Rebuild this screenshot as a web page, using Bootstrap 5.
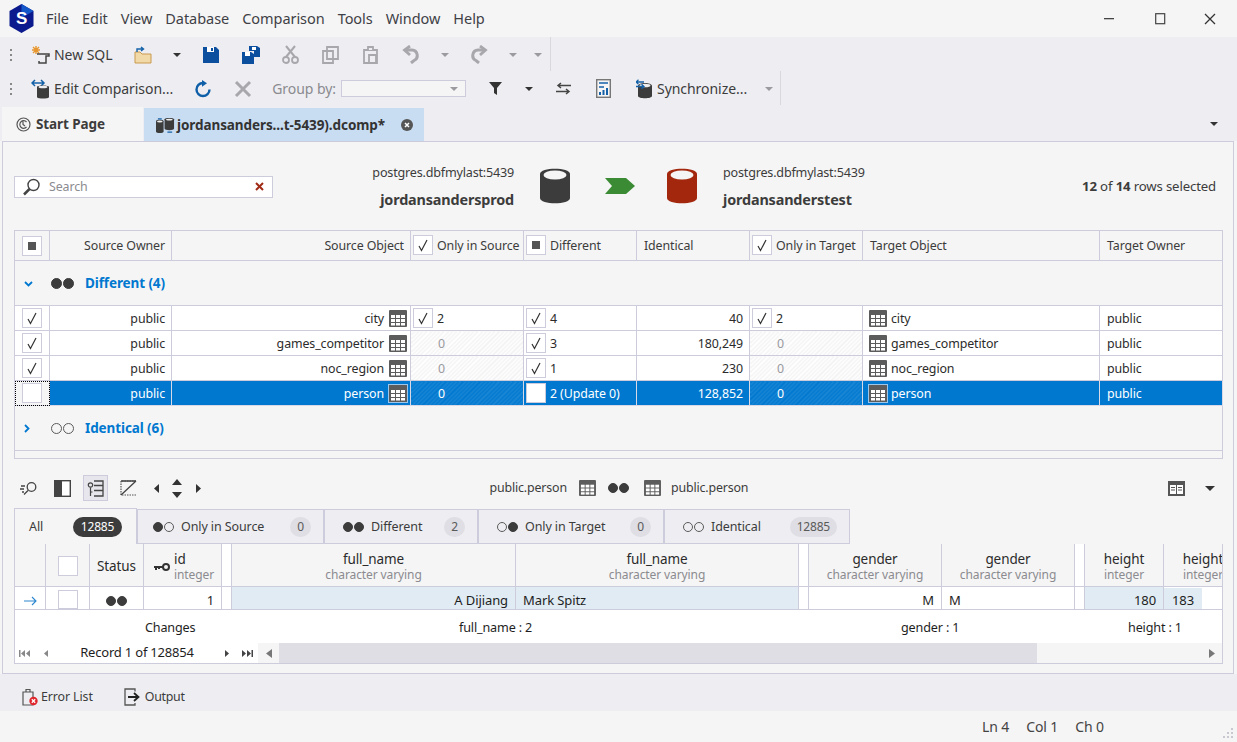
<!DOCTYPE html>
<html lang="en"><head><meta charset="utf-8"><title>dbForge</title>
<link href="https://cdn.jsdelivr.net/npm/bootstrap@5.3.0/dist/css/bootstrap.min.css" rel="stylesheet">
<style>
html,body{height:742px;overflow:hidden}
body{font-family:"Noto Sans","Liberation Sans",sans-serif;font-size:12.4px;color:#3c3c3c;background:#f5f5f5;letter-spacing:-.1px}
svg{display:block;flex:none}
.titlebar{height:37px;background:#f5f5f5}
.logo-box{width:46px;padding-left:9px}
.menu-i{font-size:14.5px;padding-right:13px;color:#3f3f46;letter-spacing:-.05px}
.win-i{width:50px;height:37px}
.win-r{margin-right:2px}
.tools{height:70px;background:#eeeef2}
.tbrow{height:34px;padding-top:1px}
.grip{width:31px;padding-left:9px}
.tb-i{width:40px}.tb-c{width:28px}.tb-c2{width:23px}.tb-c3{width:22px;margin-left:11px}
.tb-txt{font-size:14px;margin-left:4px;letter-spacing:-.05px}
.tb-txt-e{margin-right:10px}
.tb-off{color:#8a8a8f;margin-left:9px}
.tb-ml{margin-left:9px}
.tb-sync{margin-left:13px}
.tb-txt-s{margin-left:5px}
.sep{width:1px;height:34px;background:#d8d8df;margin-top:-1px}
.combo{width:125px;height:17px;background:#f5f5f5;border:1px solid #ccccdc;margin-left:5px;padding-right:3px}
.caret-d{width:0;height:0;border-left:4px solid transparent;border-right:4px solid transparent;border-top:4px solid #333}
.caret-g{border-top-color:#9a9a9f}
.caret-l{border-left-width:5px;border-right-width:5px;border-top-width:5px}
.tabstrip{height:34px;background:#eeeef2;padding-left:2px}
.tab-a{width:141px;background:#f5f5f5;padding:1px 0 0 14px;font-weight:700;font-size:13.5px;gap:5px}
.tab-b{width:281px;background:#c9ddf2;padding:1px 0 0 12px;font-weight:700;font-size:13.5px;gap:2px;border-left:1px solid #eeeef2;color:#333;margin-top:1px;letter-spacing:-.08px}
.tab-x{margin-left:14px}
.tab-car{margin-right:19px}
.panel{height:533px;margin:0 3px 0 2px;border:1px solid #ccccdc;background:#f5f5f5;padding:0 11px}
.info{height:88px}
.searchb{width:259px;height:22px;background:#fff;border:1px solid #ccccdc;padding:0 8px 0 7px;margin-top:1px;color:#8b8b90;font-size:12.4px}
.search-t{margin:2px 0 0 4px}
.src-t{width:241px;text-align:right}
.conn{font-size:12.6px;line-height:16px;margin-bottom:10px;padding-top:1px;letter-spacing:-.2px}
.dbn{font-size:14.4px;font-weight:700;line-height:18px;letter-spacing:-.15px}
.ic-a{margin-left:26px}.ic-b{margin-left:35px}.ic-c{margin-left:32px}.ic-d{margin-left:26px}
.rows-sel{margin-right:6px;margin-top:1px;font-size:13.2px;letter-spacing:-.15px}
.cmp{table-layout:fixed;width:1209px;border-collapse:collapse;background:transparent;margin:0;--bs-table-bg:transparent;color:#2b2b2b}
.cmp td,.cmp th{border:1px solid #ccccdc;padding:0 6px;font-weight:400;white-space:nowrap;overflow:hidden;vertical-align:middle}
.cmp th{height:30px;background:#f5f5f5;color:#3c3c3c;padding-top:2px}
.cmp tbody td{height:25px;background:#fff;padding-top:3px}
.cmp tbody td.grp,.cmp tbody td.grp2{height:45px;background:#f5f5f5;padding-top:1px}
.c0{width:35px}.c1{width:122px}.c2{width:239px}.c3{width:113px}.c4{width:123px}.c5{width:237px}
.cellf{gap:4px}
.gap-src{gap:5px}
.chk{width:20px;height:20px;background:#fff;border:1px solid #ccccdc}
.chk-sq::after{content:"";width:8px;height:8px;background:#555}
.cmp .cellf>.chk,.cmp .cellf>svg,.cmp .gap-src>svg{margin-top:-2px}
.cmp td.p-tight,.cmp th.p-tight{padding-left:2px;padding-right:3px}
.cmp td.p-cb,.cmp th.p-cb{padding:0 0 0 7px}
.cmp td.p-tg{padding-left:6px;padding-right:3px}
.cmp th.p-7,.cmp td.p-7{padding-left:7px}
.grplabel{color:#0078d0;font-weight:700;font-size:13.5px;gap:3px;letter-spacing:-.1px}
.arw{width:27px;padding-left:3px}
.dots{gap:1px}
.dot{width:11px;height:11px;border:1.5px solid #5a5a5a}
.dot-f{background:#3c3c3c;border-color:#3c3c3c}
.dots-s .dot{width:10px;height:10px}
.num-off{color:#9a9a9f;padding-left:21px}
.hatch{background:repeating-linear-gradient(135deg,#fff 0,#fff 1.5px,#f3f3f4 1.5px,#f3f3f4 3px)!important}
.cmp tr.sel td{background:#0078cf;color:#fff;border-color:#d8d8e6}
.cmp tr.sel td.hatch{background:repeating-linear-gradient(135deg,#0078cf 0,#0078cf 1.5px,#1a86d4 1.5px,#1a86d4 3px)!important}
.cmp tr.sel td.focusc{outline:1px dotted #000;outline-offset:-1px;background:#f5f5f5}
.num-sel{padding-left:21px}
.tbl-sel{outline:1px solid #9cc7ea}
.pad-grp{height:8px;background:#f5f5f5;border:1px solid #ccccdc;border-top:0;width:1209px}
.dtool{height:26px;margin:16px 0 0 -2px;position:relative}
.dt-i{width:33.5px;height:26px}
.dt-on{background:#e6e6ec;border:1px solid #ccccdc;width:25px;margin:0 4px}
.dt-s{width:21px}
.dt-mid{margin-left:281px;gap:12px;font-size:12.4px;letter-spacing:-.15px}
.dt-mid2{margin-left:3px}
.dt-last{margin-left:-2px}
.dt-end{margin-left:auto;margin-right:7px;gap:20px}
.dtabs{height:36px;margin-top:7px;width:1209px}
.dtab{height:35px;background:#eeeef2;border:1px solid #ccccdc;margin-top:1px;font-size:12.5px;gap:7px;padding:1px 12px 0 18px}
.dtab-all{width:123px;background:#f5f5f5;height:36px;margin-top:0;border-bottom:0;justify-content:space-between;padding:1px 14px 0}
.dw1{width:187px;padding-left:15px}.dw2{width:154px}.dw3{width:186px}.dw4{width:186px}
.pill{background:#dedee4;color:#5a5a5a;font-weight:400;font-size:12px;padding:3px 7px;border-radius:10px;line-height:14px;letter-spacing:-.2px}
.pill-d{background:#3c3c3c;color:#fff;padding:3px 7px;min-width:49px;text-align:center}
.gridbox{width:1209px;background:#fff;border:1px solid #ccccdc;border-top:0;overflow:hidden;height:120px}
.dg{table-layout:fixed;width:1228px;border-collapse:collapse;margin:-1px 0 0 -1px;font-size:13px;color:#1e1e1e;--bs-table-bg:transparent}
.dg th,.dg td{border:1px solid #ccccdc;padding:0 7px;font-weight:400;overflow:hidden;white-space:nowrap;vertical-align:middle;line-height:15px}
.dg th{height:43px;background:#f5f5f5;text-align:center;color:#2b2b2b;font-size:13.5px;padding-top:4px}
.dg th.p-st{padding-top:2px}
.dg th small{display:block;font-size:12px;color:#8b8b90;letter-spacing:-.1px}
.dg td{height:22px;background:#fff;padding-top:5px}
.dg th.gapc,.dg td.gapc{background:#fff;padding:0}
.dg td.dif{background:#e0ebf3}
.dg td.p-c{padding-top:3px}
.dg th.p-key{padding-left:2px;padding-right:0}
.chk-w{width:20px;height:20px;background:#fff;border:1px solid #ccccdc;margin:0 auto}
.dg td .chk-w{height:19px}
.gw0{width:31px}.gw1{width:44px}.gw2{width:54px}.gw3{width:78px}.gw4{width:10px}.gw5{width:284px}.gw6{width:283px}.gw7{width:133px}.gw8{width:79px}
.dg td.lastc{padding:0}
.lastin{width:38px;height:21px;background:#e0ebf3;padding:5px 0 0 8px;line-height:15px}
.sumrow{height:33px;padding-top:4px;font-size:12.6px;color:#1e1e1e;letter-spacing:-.15px}
.sm1{width:444px;padding-left:130px}.sm2{width:442px}.sm3{width:227px}
.navrow{height:21px}
.navl{width:243px;font-size:13px;color:#1e1e1e}
.nv1{width:18px}.nv2{width:24px}.nv3{width:20px}
.rec{width:160px;text-align:center;letter-spacing:-.2px;padding-bottom:2px}
.sbar{height:21px;background:#f5f5f5}
.sb-l{width:21px}.sb-th{width:758px;background:#dedee4;height:100%}.sb-r{margin-left:auto;width:20px}
.botbar{height:37px;background:#eeeef2;padding:9px 0 0 22px;font-size:12.4px}
.bot-i{gap:3px}
.bot-2{margin-left:31px;gap:4px}
.bot-o{letter-spacing:-.3px}
.statusb{height:31px;background:#f5f5f5;font-size:14px;color:#444}
.stt{margin-right:133px;gap:17px;margin-left:auto}
.grip-r{position:absolute;right:3px;bottom:3px}
.relw{position:relative}
</style></head><body>
<svg width="0" height="0" class="position-absolute">
<defs>
<symbol id="grip" viewBox="0 0 4 14"><rect x="1" y="1" width="2" height="2" fill="#888"/><rect x="1" y="6" width="2" height="2" fill="#888"/><rect x="1" y="11" width="2" height="2" fill="#888"/></symbol>
<symbol id="tbl" viewBox="0 0 18 17"><rect width="18" height="17" rx="1" fill="#5c5c5c"/><g fill="#fff"><rect x="2" y="5" width="4" height="3"/><rect x="7" y="5" width="4" height="3"/><rect x="12" y="5" width="4" height="3"/><rect x="2" y="9" width="4" height="3"/><rect x="7" y="9" width="4" height="3"/><rect x="12" y="9" width="4" height="3"/><rect x="2" y="13" width="4" height="2.5"/><rect x="7" y="13" width="4" height="2.5"/><rect x="12" y="13" width="4" height="2.5"/></g></symbol>
<symbol id="ck" viewBox="0 0 12 14"><path d="M2 8l2.500 4.500L10 2" fill="none" stroke="#333" stroke-width="1.200"/></symbol>
<symbol id="db" viewBox="0 0 30 36"><path d="M0 6C0-1 30-1 30 6V30C30 37 0 37 0 30Z" fill="currentColor"/><ellipse cx="15" cy="7" rx="11.500" ry="4.500" fill="#f5f5f5"/></symbol>
</defs></svg>

<div class="titlebar d-flex align-items-center">
 <div class="logo-box">
  <svg width="25" height="29" viewBox="0 0 25 29"><polygon points="12.5,0 24.5,7 24.5,22 12.5,29 .5,22 .5,7" fill="#0b1a8c"/><polygon points="12.5,0 24.5,7 12.5,14" fill="#1457c9"/><text x="12.5" y="20" text-anchor="middle" font-family="Liberation Sans" font-weight="700" font-size="17" fill="#fff">S</text></svg>
 </div>
 <nav class="d-flex">
  <span class="menu-i">File</span><span class="menu-i">Edit</span><span class="menu-i">View</span><span class="menu-i">Database</span><span class="menu-i">Comparison</span><span class="menu-i">Tools</span><span class="menu-i">Window</span><span class="menu-i">Help</span>
 </nav>
 <div class="ms-auto d-flex win-r">
  <div class="win-i d-flex align-items-center justify-content-center"><svg width="12" height="2"><rect width="10" height="1.3" fill="#444"/></svg></div>
  <div class="win-i d-flex align-items-center justify-content-center"><svg width="11" height="12"><rect x=".7" y=".7" width="9" height="10" fill="none" stroke="#444" stroke-width="1.2"/></svg></div>
  <div class="win-i d-flex align-items-center justify-content-center"><svg width="12" height="12"><path d="M1 1l10 10M11 1L1 11" stroke="#333" stroke-width="1.3"/></svg></div>
 </div>
</div>

<div class="tools">
 <div class="tbrow d-flex align-items-center">
  <div class="grip"><svg width="4" height="14"><use href="#grip"/></svg></div>
  <svg width="19" height="20" viewBox="0 0 19 20"><path d="M5 1v8M1 5h8M2 2l6 6M8 2L2 8" stroke="#e8962e" stroke-width="1.4"/><path d="M6 9h12v2h-3v7H8v-2" fill="none" stroke="#444" stroke-width="1.5"/></svg>
  <span class="tb-txt tb-txt-e">New SQL</span>
  <div class="tb-i d-flex justify-content-center"><svg width="18" height="18" viewBox="0 0 18 18"><path d="M1 6h5l2 2h9v9H1Z" fill="#f2d9a8" stroke="#c99a4e"/><path d="M3 6V3h6M7 1l2.500 2L7 5" fill="none" stroke="#1461a8" stroke-width="1.400"/></svg></div>
  <div class="tb-c d-flex justify-content-center"><span class="caret-d"></span></div>
  <div class="tb-i d-flex justify-content-center"><svg width="16" height="16" viewBox="0 0 16 16"><path d="M0 0h13l3 3v13H0Z" fill="#0b4f9e"/><rect x="4" y="0" width="7" height="5" fill="#fff"/><rect x="8" y="1" width="2" height="3" fill="#0b4f9e"/></svg></div>
  <div class="tb-i d-flex justify-content-center"><svg width="18" height="18" viewBox="0 0 18 18"><path d="M7 0h8l3 2v9h-6V5H7Z" fill="#0b4f9e"/><path d="M0 6h9l3 2v10H0Z" fill="#0b4f9e"/><rect x="3" y="6" width="5" height="4" fill="#fff"/><rect x="10" y="1" width="4" height="3" fill="#fff"/></svg></div>
  <div class="tb-i d-flex justify-content-center"><svg width="17" height="19" viewBox="0 0 17 19"><path d="M4 1l9 11M13 1L4 12" stroke="#a8a8ac" stroke-width="2"/><circle cx="4" cy="15" r="3" fill="none" stroke="#a8a8ac" stroke-width="1.800"/><circle cx="13" cy="15" r="3" fill="none" stroke="#a8a8ac" stroke-width="1.800"/></svg></div>
  <div class="tb-i d-flex justify-content-center"><svg width="17" height="18" viewBox="0 0 17 18"><path d="M5 1h11v12H5Z M1 5h10v12H1Z" fill="#eeeef2" stroke="#a8a8ac" stroke-width="1.800"/></svg></div>
  <div class="tb-i d-flex justify-content-center"><svg width="17" height="18" viewBox="0 0 17 18"><path d="M2 4h13v13H2Z" fill="none" stroke="#a8a8ac" stroke-width="1.800"/><path d="M6 4V1h5v3M7 9h7v8H7Z" fill="#eeeef2" stroke="#a8a8ac" stroke-width="1.800"/></svg></div>
  <div class="tb-i d-flex justify-content-center"><svg width="18" height="19" viewBox="0 0 18 19"><path d="M4 5h6a5.500 5.500 0 0 1 2 10.500L9 18" fill="none" stroke="#a8a8ac" stroke-width="3"/><path d="M8 1L2.500 5 8 10" fill="none" stroke="#a8a8ac" stroke-width="2.800"/></svg></div>
  <div class="tb-c d-flex justify-content-center"><span class="caret-d caret-g"></span></div>
  <div class="tb-i d-flex justify-content-center"><svg width="18" height="19" viewBox="0 0 18 19"><path d="M14 5H8a5.500 5.500 0 0 0-2 10.500L9 18" fill="none" stroke="#a8a8ac" stroke-width="3"/><path d="M10 1l5.500 4L10 10" fill="none" stroke="#a8a8ac" stroke-width="2.800"/></svg></div>
  <div class="tb-c d-flex justify-content-center"><span class="caret-d caret-g"></span></div>
  <div class="tb-c2 d-flex justify-content-center"><span class="caret-d caret-g"></span></div>
  <div class="sep"></div>
 </div>
 <div class="tbrow d-flex align-items-center">
  <div class="grip"><svg width="4" height="14"><use href="#grip"/></svg></div>
  <svg width="19" height="20" viewBox="0 0 19 20"><path d="M1 4h12M4 1L1 4l3 3M10 1l3 3-3 3" fill="none" stroke="#1461a8" stroke-width="1.500"/><path d="M6 8C6 6 18 6 18 8V18C18 20 6 20 6 18Z" fill="#3c3c3c"/><ellipse cx="12" cy="8" rx="4.500" ry="1.300" fill="#eee"/></svg>
  <span class="tb-txt tb-txt-e">Edit Comparison...</span>
  <div class="tb-i d-flex justify-content-center"><svg width="18" height="18" viewBox="0 0 18 18"><path d="M15.500 9.500A6.500 6.500 0 1 1 9 3h1" fill="none" stroke="#0f5fa8" stroke-width="2.400"/><path d="M8 0l5 3.200-5 3.500Z" fill="#0f5fa8"/></svg></div>
  <div class="tb-i d-flex justify-content-center"><svg width="18" height="18" viewBox="0 0 18 18"><path d="M2 2l14 14M16 2L2 16" stroke="#a8a8ac" stroke-width="3"/></svg></div>
  <span class="tb-txt tb-off">Group by:</span>
  <div class="combo d-flex align-items-center justify-content-end"><span class="caret-d caret-g me-1"></span></div>
  <div class="tb-i tb-ml d-flex justify-content-center"><svg width="13" height="13" viewBox="0 0 13 13"><path d="M0 0h13L8 6v7L5 11V6Z" fill="#333"/></svg></div>
  <div class="tb-c d-flex justify-content-center"><span class="caret-d"></span></div>
  <div class="tb-i d-flex justify-content-center"><svg width="15" height="13" viewBox="0 0 15 13"><path d="M15 3.500H2M5 1L2 3.500 5 6M0 9.500h13M10 7l3 2.500L10 12" fill="none" stroke="#444" stroke-width="1.500"/></svg></div>
  <div class="tb-i d-flex justify-content-center"><svg width="15" height="19" viewBox="0 0 15 19"><rect x=".7" y=".7" width="13.600" height="17.600" fill="#f5f5f5" stroke="#777" stroke-width="1.400"/><path d="M3 4h9" stroke="#1461a8" stroke-width="1.500"/><path d="M3 8h5" stroke="#1461a8" stroke-width="1.500"/><path d="M4 16v-3M7.500 16v-5M11 16V9" stroke="#1461a8" stroke-width="2"/></svg></div>
  <svg class="tb-sync" width="16" height="20" viewBox="0 0 16 20"><path d="M2 7C2 3 16 3 16 7V17C16 20 2 20 2 17Z" fill="#3c3c3c"/><ellipse cx="9" cy="6.500" rx="5.500" ry="1.800" fill="#eee"/><path d="M0 3h8M2.500 .8L0 3l2.500 2.200M0 7.500h8M5.500 5.300L8 7.500 5.500 9.700" fill="none" stroke="#1461a8" stroke-width="1.300"/></svg>
  <span class="tb-txt tb-txt-s">Synchronize...</span>
  <div class="tb-c3 d-flex justify-content-center"><span class="caret-d caret-g"></span></div>
  <div class="sep"></div>
 </div>
</div>

<div class="tabstrip d-flex">
 <div class="tab-a d-flex align-items-center"><svg width="15" height="15" viewBox="0 0 15 15"><circle cx="7.500" cy="7.500" r="6.500" fill="none" stroke="#555" stroke-width="1.200"/><path d="M10.500 5A3.800 3.800 0 1 0 10.500 10M7 4.500v3l2 1.500" fill="none" stroke="#555" stroke-width="1.200"/></svg><span>Start Page</span></div>
 <div class="tab-b d-flex align-items-center"><svg width="19" height="19" viewBox="0 0 20 19"><path d="M0 5C0 3 8 3 8 5V16C8 18 0 18 0 16Z" fill="#3c3c3c"/><ellipse cx="4" cy="5.300" rx="3" ry="1" fill="#eee"/><path d="M9 3C9 1 19 1 19 3V13C19 15 9 15 9 13Z" fill="#3c3c3c"/><ellipse cx="14" cy="3.300" rx="3.500" ry="1" fill="#eee"/><path d="M2 2.500h4M12 16.500h5" stroke="#1461a8" stroke-width="1.500"/></svg><span>jordansanders...t-5439).dcomp*</span>
  <svg class="tab-x" width="12" height="12" viewBox="0 0 12 12"><circle cx="6" cy="6" r="6" fill="#555"/><path d="M4 4l4 4M8 4L4 8" stroke="#fff" stroke-width="1.500"/></svg></div>
 <div class="ms-auto d-flex align-items-center tab-car"><span class="caret-d"></span></div>
</div>

<main class="panel">
 <div class="info d-flex align-items-center">
  <div class="searchb d-flex align-items-center">
   <svg class="me-1" width="19" height="18" viewBox="0 0 19 18"><circle cx="11.500" cy="7" r="5.500" fill="none" stroke="#444" stroke-width="1.400"/><path d="M7.500 11L2 16.500" stroke="#444" stroke-width="2.500"/></svg>
   <span class="search-t">Search</span>
   <svg class="ms-auto" width="9" height="9" viewBox="0 0 9 9"><path d="M1 1l7 7M8 1L1 8" stroke="#a12b16" stroke-width="2"/></svg>
  </div>
  <div class="src-t"><div class="conn">postgres.dbfmylast:5439</div><div class="dbn">jordansandersprod</div></div>
  <svg class="ic-a" width="30" height="36" color="#3c3c3c"><use href="#db"/></svg>
  <svg class="ic-b" width="30" height="16" viewBox="0 0 30 16"><polygon points="0,0 21,0 30,8 21,16 0,16 7,8" fill="#3a8b34"/></svg>
  <svg class="ic-c" width="30" height="36" color="#a3270d"><use href="#db"/></svg>
  <div class="ic-d"><div class="conn">postgres.dbfmylast:5439</div><div class="dbn">jordansanderstest</div></div>
  <div class="ms-auto rows-sel"><b>12</b> of <b>14</b> rows selected</div>
 </div>

 <table class="table cmp">
  <colgroup><col class="c0"><col class="c1"><col class="c2"><col class="c3"><col class="c3"><col class="c3"><col class="c3"><col class="c5"><col class="c4"></colgroup>
  <thead><tr>
   <th class="p-cb"><div class="chk chk-sq d-flex align-items-center justify-content-center"></div></th>
   <th class="text-end">Source Owner</th>
   <th class="text-end">Source Object</th>
   <th class="p-tight"><div class="d-flex align-items-center cellf"><div class="chk d-flex align-items-center justify-content-center"><svg width="12" height="14"><use href="#ck"/></svg></div>Only in Source</div></th>
   <th class="p-tight"><div class="d-flex align-items-center cellf"><div class="chk chk-sq d-flex align-items-center justify-content-center"></div>Different</div></th>
   <th class="p-7">Identical</th>
   <th class="p-tight"><div class="d-flex align-items-center cellf"><div class="chk d-flex align-items-center justify-content-center"><svg width="12" height="14"><use href="#ck"/></svg></div>Only in Target</div></th>
   <th class="p-7">Target Object</th>
   <th class="p-7">Target Owner</th>
  </tr></thead>
  <tbody>
   <tr><td colspan="9" class="grp"><div class="grplabel d-flex align-items-center"><span class="arw"><svg width="9" height="6" viewBox="0 0 9 6"><path d="M1 1l3.500 3.500L8 1" fill="none" stroke="#0078d0" stroke-width="1.800"/></svg></span><span class="dots d-flex me-2"><span class="dot dot-f rounded-circle"></span><span class="dot dot-f rounded-circle"></span></span><span>Different (4)</span></div></td></tr>
   <tr>
    <td class="p-cb"><div class="chk d-flex align-items-center justify-content-center"><svg width="12" height="14"><use href="#ck"/></svg></div></td>
    <td class="text-end">public</td>
    <td class="p-tight"><div class="d-flex align-items-center justify-content-end gap-src">city<svg width="18" height="17"><use href="#tbl"/></svg></div></td>
    <td class="p-tight"><div class="d-flex align-items-center cellf"><div class="chk d-flex align-items-center justify-content-center"><svg width="12" height="14"><use href="#ck"/></svg></div>2</div></td>
    <td class="p-tight"><div class="d-flex align-items-center cellf"><div class="chk d-flex align-items-center justify-content-center"><svg width="12" height="14"><use href="#ck"/></svg></div>4</div></td>
    <td class="text-end">40</td>
    <td class="p-tight"><div class="d-flex align-items-center cellf"><div class="chk d-flex align-items-center justify-content-center"><svg width="12" height="14"><use href="#ck"/></svg></div>2</div></td>
    <td class="p-tg"><div class="d-flex align-items-center cellf"><svg width="18" height="17"><use href="#tbl"/></svg>city</div></td>
    <td class="p-7">public</td>
   </tr>
   <tr>
    <td class="p-cb"><div class="chk d-flex align-items-center justify-content-center"><svg width="12" height="14"><use href="#ck"/></svg></div></td>
    <td class="text-end">public</td>
    <td class="p-tight"><div class="d-flex align-items-center justify-content-end gap-src">games_competitor<svg width="18" height="17"><use href="#tbl"/></svg></div></td>
    <td class="hatch"><span class="num-off">0</span></td>
    <td class="p-tight"><div class="d-flex align-items-center cellf"><div class="chk d-flex align-items-center justify-content-center"><svg width="12" height="14"><use href="#ck"/></svg></div>3</div></td>
    <td class="text-end">180,249</td>
    <td class="hatch"><span class="num-off">0</span></td>
    <td class="p-tg"><div class="d-flex align-items-center cellf"><svg width="18" height="17"><use href="#tbl"/></svg>games_competitor</div></td>
    <td class="p-7">public</td>
   </tr>
   <tr>
    <td class="p-cb"><div class="chk d-flex align-items-center justify-content-center"><svg width="12" height="14"><use href="#ck"/></svg></div></td>
    <td class="text-end">public</td>
    <td class="p-tight"><div class="d-flex align-items-center justify-content-end gap-src">noc_region<svg width="18" height="17"><use href="#tbl"/></svg></div></td>
    <td class="hatch"><span class="num-off">0</span></td>
    <td class="p-tight"><div class="d-flex align-items-center cellf"><div class="chk d-flex align-items-center justify-content-center"><svg width="12" height="14"><use href="#ck"/></svg></div>1</div></td>
    <td class="text-end">230</td>
    <td class="hatch"><span class="num-off">0</span></td>
    <td class="p-tg"><div class="d-flex align-items-center cellf"><svg width="18" height="17"><use href="#tbl"/></svg>noc_region</div></td>
    <td class="p-7">public</td>
   </tr>
   <tr class="sel">
    <td class="p-cb focusc"><div class="chk"></div></td>
    <td class="text-end">public</td>
    <td class="p-tight"><div class="d-flex align-items-center justify-content-end gap-src">person<svg class="tbl-sel" width="18" height="17"><use href="#tbl"/></svg></div></td>
    <td class="hatch"><span class="num-sel">0</span></td>
    <td class="p-tight"><div class="d-flex align-items-center cellf"><div class="chk"></div>2 (Update 0)</div></td>
    <td class="text-end">128,852</td>
    <td class="hatch"><span class="num-sel">0</span></td>
    <td class="p-tg"><div class="d-flex align-items-center cellf"><svg class="tbl-sel" width="18" height="17"><use href="#tbl"/></svg>person</div></td>
    <td class="p-7">public</td>
   </tr>
   <tr><td colspan="9" class="grp2"><div class="grplabel d-flex align-items-center"><span class="arw"><svg width="6" height="9" viewBox="0 0 6 9"><path d="M1 1l3.500 3.500L1 8" fill="none" stroke="#0078d0" stroke-width="1.800"/></svg></span><span class="dots d-flex me-2"><span class="dot rounded-circle"></span><span class="dot rounded-circle"></span></span><span>Identical (6)</span></div></td></tr>
  </tbody>
 </table>
 <div class="pad-grp"></div>

 <div class="dtool d-flex align-items-center">
  <div class="dt-i d-flex align-items-center justify-content-center"><svg width="18" height="15" viewBox="0 0 18 15"><circle cx="11.500" cy="6" r="4.300" fill="none" stroke="#444" stroke-width="1.300"/><path d="M8 9.500L4 13.500M1 5h4M0 8h4M2 11h2" stroke="#444" stroke-width="1.300"/></svg></div>
  <div class="dt-i d-flex align-items-center justify-content-center"><svg width="17" height="17" viewBox="0 0 17 17"><rect x=".7" y=".7" width="15.600" height="15.600" fill="#fff" stroke="#444" stroke-width="1.400"/><rect x="1" y="1" width="7" height="15" fill="#444"/></svg></div>
  <div class="dt-i dt-on d-flex align-items-center justify-content-center"><svg width="17" height="17" viewBox="0 0 17 17"><path d="M7 1h9v15H7M7 5.500h9M7 10.500h9" fill="none" stroke="#444" stroke-width="1.300"/><circle cx="3.500" cy="5" r="2.200" fill="none" stroke="#444" stroke-width="1.200"/><path d="M3.500 7.500V16M3.500 12h2" stroke="#444" stroke-width="1.200"/></svg></div>
  <div class="dt-i d-flex align-items-center justify-content-center"><svg width="17" height="16" viewBox="0 0 17 16"><path d="M16 15H1V1h15" fill="none" stroke="#555" stroke-width="1.200" stroke-dasharray="1.500 1"/><path d="M1 15L16 1M1 1h15" stroke="#444" stroke-width="1.300"/></svg></div>
  <div class="dt-s d-flex justify-content-center"><svg width="5" height="9"><path d="M5 0v9L0 4.500Z" fill="#333"/></svg></div>
  <div class="dt-s d-flex justify-content-center"><svg width="10" height="19" viewBox="0 0 10 19"><path d="M0 6h10L5 0ZM0 13h10L5 19Z" fill="#333"/></svg></div>
  <div class="dt-s d-flex justify-content-center"><svg width="5" height="9"><path d="M0 0v9l5-4.500Z" fill="#333"/></svg></div>
  <div class="dt-mid d-flex align-items-center"><span>public.person</span><svg width="17" height="16"><use href="#tbl"/></svg><span class="dots dots-s d-flex"><span class="dot dot-f rounded-circle"></span><span class="dot dot-f rounded-circle"></span></span><svg class="dt-mid2" width="17" height="16"><use href="#tbl"/></svg><span class="dt-last">public.person</span></div>
  <div class="dt-end d-flex align-items-center"><svg width="17" height="15" viewBox="0 0 17 15"><rect width="17" height="15" fill="#555"/><rect x="2" y="4" width="6" height="9" fill="#fff"/><rect x="9" y="4" width="6" height="9" fill="#fff"/><path d="M3 6.500h4M3 9h4M10 6.500h4M10 9h4" stroke="#555"/></svg><span class="caret-d caret-l"></span></div>
 </div>

 <div class="dtabs d-flex">
  <div class="dtab dtab-all d-flex align-items-center"><span>All</span><span class="badge pill pill-d">12885</span></div>
  <div class="dtab dw1 d-flex align-items-center"><span class="dots dots-s d-flex"><span class="dot dot-f rounded-circle"></span><span class="dot rounded-circle"></span></span><span>Only in Source</span><span class="badge pill ms-auto">0</span></div>
  <div class="dtab dw2 d-flex align-items-center"><span class="dots dots-s d-flex"><span class="dot dot-f rounded-circle"></span><span class="dot dot-f rounded-circle"></span></span><span>Different</span><span class="badge pill ms-auto">2</span></div>
  <div class="dtab dw3 d-flex align-items-center"><span class="dots dots-s d-flex"><span class="dot rounded-circle"></span><span class="dot dot-f rounded-circle"></span></span><span>Only in Target</span><span class="badge pill ms-auto">0</span></div>
  <div class="dtab dw4 d-flex align-items-center"><span class="dots dots-s d-flex"><span class="dot rounded-circle"></span><span class="dot rounded-circle"></span></span><span>Identical</span><span class="badge pill ms-auto">12885</span></div>
 </div>

 <div class="gridbox">
  <table class="table dg mb-0">
   <colgroup><col class="gw0"><col class="gw1"><col class="gw2"><col class="gw3"><col class="gw4"><col class="gw5"><col class="gw6"><col class="gw4"><col class="gw7"><col class="gw7"><col class="gw4"><col class="gw8"><col class="gw8"></colgroup>
   <thead><tr>
    <th></th><th class="p-st"><div class="chk-w"></div></th><th class="p-st">Status</th>
    <th class="text-start p-key"><div class="d-flex align-items-center gap-1 ps-2"><svg width="16" height="8" viewBox="0 0 16 8"><circle cx="12" cy="4" r="3" fill="none" stroke="#333" stroke-width="2"/><path d="M9 4H0M2 4v3M5 4v2" stroke="#333" stroke-width="2"/></svg><span>id<small>integer</small></span></div></th>
    <th class="gapc"></th>
    <th>full_name<small>character varying</small></th><th>full_name<small>character varying</small></th>
    <th class="gapc"></th>
    <th>gender<small>character varying</small></th><th>gender<small>character varying</small></th>
    <th class="gapc"></th>
    <th>height<small>integer</small></th><th>height<small>integer</small></th>
   </tr></thead>
   <tbody><tr>
    <td class="text-center"><svg class="mx-auto" width="13" height="10" viewBox="0 0 13 10"><path d="M0 5h12M8 1l4 4-4 4" fill="none" stroke="#2b87d0" stroke-width="1.100"/></svg></td>
    <td class="p-c"><div class="chk-w"></div></td>
    <td><span class="dots dots-s d-flex justify-content-center"><span class="dot dot-f rounded-circle"></span><span class="dot dot-f rounded-circle"></span></span></td>
    <td class="text-end">1</td>
    <td class="gapc"></td>
    <td class="dif text-end">A Dijiang</td><td class="dif">Mark Spitz</td>
    <td class="gapc"></td>
    <td class="text-end">M</td><td>M</td>
    <td class="gapc"></td>
    <td class="dif text-end">180</td><td class="lastc"><div class="lastin">183</div></td>
   </tr></tbody>
  </table>
  <div class="sumrow d-flex align-items-center"><span class="sm1">Changes</span><span class="sm2">full_name : 2</span><span class="sm3">gender : 1</span><span>height : 1</span></div>
  <div class="navrow d-flex">
   <div class="navl d-flex align-items-center flex-none">
    <div class="nv1 d-flex justify-content-center"><svg width="11" height="7"><path d="M0 0h1.500v7H0ZM6 0v7L2 3.500ZM11 0v7L7 3.500Z" fill="#888"/></svg></div>
    <div class="nv2 d-flex justify-content-center"><svg width="5" height="7"><path d="M5 0v7L1 3.500Z" fill="#888"/></svg></div>
    <div class="rec">Record 1 of 128854</div>
    <div class="nv3 d-flex justify-content-center"><svg width="5" height="7"><path d="M0 0v7l4-3.500Z" fill="#444"/></svg></div>
    <div class="nv3 d-flex justify-content-center"><svg width="11" height="7"><path d="M0 0v7l4-3.500ZM5 0v7l4-3.500ZM9.500 0H11v7H9.500Z" fill="#444"/></svg></div>
   </div>
   <div class="sbar flex-grow-1 d-flex align-items-center">
    <div class="sb-l d-flex justify-content-center"><svg width="6" height="9"><path d="M6 0v9L0 4.500Z" fill="#777"/></svg></div>
    <div class="sb-th"></div>
    <div class="sb-r d-flex justify-content-center"><svg width="6" height="9"><path d="M0 0v9l6-4.500Z" fill="#777"/></svg></div>
   </div>
  </div>
 </div>
</main>

<div class="botbar d-flex align-items-center">
 <div class="bot-i d-flex align-items-center"><svg width="16" height="18" viewBox="0 0 16 18"><path d="M1 4h10v13H1Z" fill="none" stroke="#555" stroke-width="1.200"/><path d="M4 4V1.500h4V4" fill="none" stroke="#555" stroke-width="1.200"/><circle cx="11.500" cy="13" r="4.200" fill="#e0262d"/><path d="M9.800 11.300l3.400 3.400M13.200 11.300l-3.400 3.400" stroke="#fff" stroke-width="1.300"/></svg><span>Error List</span></div>
 <div class="bot-2 d-flex align-items-center"><svg width="17" height="18" viewBox="0 0 17 18"><path d="M11 3.500V1H1v16h10v-2" fill="none" stroke="#555" stroke-width="1.300"/><path d="M4 9h10M10 5l4.500 4-4.500 4" fill="none" stroke="#222" stroke-width="1.800"/></svg><span class="bot-o">Output</span></div>
</div>
<footer class="statusb d-flex align-items-center relw">
 <div class="stt d-flex"><span>Ln 4</span><span>Col 1</span><span>Ch 0</span></div>
 <svg class="grip-r" width="12" height="12" viewBox="0 0 12 12"><g fill="#c8c8d0"><rect x="9" y="1" width="2" height="2"/><rect x="5" y="5" width="2" height="2"/><rect x="9" y="5" width="2" height="2"/><rect x="1" y="9" width="2" height="2"/><rect x="5" y="9" width="2" height="2"/><rect x="9" y="9" width="2" height="2"/></g></svg>
</footer>
<script src="https://cdn.jsdelivr.net/npm/bootstrap@5.3.0/dist/js/bootstrap.bundle.min.js"></script>
</body></html>
